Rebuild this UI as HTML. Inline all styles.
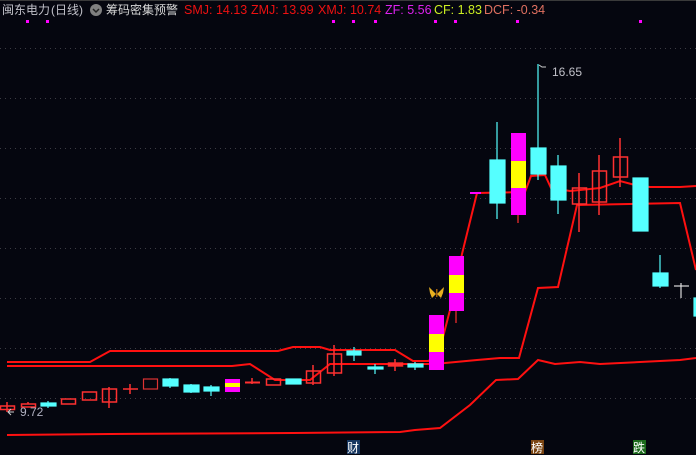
<!DOCTYPE html>
<html><head><meta charset="utf-8"><style>
html,body{margin:0;padding:0;background:#05060f;width:696px;height:455px;overflow:hidden}
svg{display:block}
text{font-family:"Liberation Sans","Noto Sans CJK SC",sans-serif}
</style></head><body>
<svg width="696" height="455" viewBox="0 0 696 455" xmlns="http://www.w3.org/2000/svg">
<rect width="696" height="455" fill="#05060f"/>
<line x1="0" y1="0.5" x2="696" y2="0.5" stroke="#3a3a3a"/>
<g stroke="#3c3c44" stroke-dasharray="1,4" stroke-width="1">
<line x1="0" y1="48.5" x2="696" y2="48.5"/><line x1="0" y1="98.5" x2="696" y2="98.5"/>
<line x1="0" y1="148.5" x2="696" y2="148.5"/><line x1="0" y1="198.5" x2="696" y2="198.5"/>
<line x1="0" y1="248.5" x2="696" y2="248.5"/><line x1="0" y1="298.5" x2="696" y2="298.5"/>
<line x1="0" y1="348.5" x2="696" y2="348.5"/><line x1="0" y1="398.5" x2="696" y2="398.5"/>
</g>
<text x="2" y="14" font-size="12" fill="#c0c0c8">闽东电力</text>
<text x="51" y="14" font-size="12" fill="#c0c0c8">(日线)</text>
<circle cx="96" cy="10" r="6" fill="#808080"/><path d="M93 9 l3 3 l3 -3" stroke="#222" stroke-width="1.5" fill="none"/>
<text x="106" y="14" font-size="12" fill="#d8d8d8">筹码密集预警</text>
<text x="184" y="14" font-size="12.5" fill="#ee1111">SMJ: 14.13</text>
<text x="251" y="14" font-size="12.5" fill="#ee1111">ZMJ: 13.99</text>
<text x="318" y="14" font-size="12.5" fill="#ee1111">XMJ: 10.74</text>
<text x="385" y="14" font-size="12.5" fill="#dd22ee">ZF: 5.56</text>
<text x="434" y="14" font-size="12.5" fill="#ccee22">CF: 1.83</text>
<text x="484" y="14" font-size="12.5" fill="#e07060">DCF: -0.34</text>
<g fill="#ff00ff">
<rect x="26" y="20" width="3" height="3"/><rect x="46" y="20" width="3" height="3"/><rect x="332" y="20" width="3" height="3"/>
<rect x="352" y="20" width="3" height="3"/><rect x="374" y="20" width="3" height="3"/><rect x="434" y="20" width="3" height="3"/>
<rect x="454" y="20" width="3" height="3"/><rect x="516" y="20" width="3" height="3"/><rect x="639" y="20" width="3" height="3"/>
</g>
<g fill="none" stroke="#ff1010" stroke-width="2">
<polyline points="7,362 90,362 110,351 278,351 293,347 320,347 330,350 395,350 413,361 429,361 443,337 450,310 462,254 477,193 525,192 531,176 545,175 551,188 570,191 600,188 620,181 635,185 650,187 680,187 696,186"/>
<polyline points="7,366 232,366 250,364 275,380 310,380 330,364 430,364 445,363 477,360 500,358 519,358 538,288 558,287 577,205 680,203 696,270"/>
<polyline points="7,435 110,434 293,433 400,432 415,430 440,428 470,405 496,380 518,379 538,360 555,364 580,362 600,364 640,362 680,360 696,358"/>
</g>
<line x1="470" y1="193" x2="481" y2="193" stroke="#ff00ff" stroke-width="2"/>
<g fill="none" stroke="#ff3030" stroke-width="1.5">
<line x1="7" y1="402" x2="7" y2="412"/><rect x="0.5" y="406" width="14" height="3.5"/>
<rect x="21.5" y="404" width="14" height="3"/><line x1="28" y1="402" x2="28" y2="404"/>
<rect x="61.5" y="399" width="14" height="5"/>
<rect x="82.5" y="392" width="14" height="8"/>
<line x1="109" y1="387" x2="109" y2="408"/><rect x="102.5" y="389" width="14" height="13"/>
<line x1="130" y1="384" x2="130" y2="394"/><line x1="123" y1="389" x2="138" y2="389"/>
<rect x="143.5" y="379" width="14" height="10" stroke="#dd3333" stroke-width="1.2"/>
<line x1="252" y1="378" x2="252" y2="384"/><line x1="245" y1="382.5" x2="260" y2="382.5" stroke-width="2"/>
<rect x="266.5" y="379" width="14" height="6"/>
<line x1="313" y1="365" x2="313" y2="385"/><rect x="306.5" y="371" width="14" height="12"/>
<line x1="334" y1="345" x2="334" y2="376"/><rect x="327.5" y="354" width="14" height="19"/>
<line x1="395" y1="359" x2="395" y2="371"/><rect x="388.5" y="363" width="14" height="3" fill="#ff3030" stroke-opacity="0.9"/>
<line x1="579" y1="173" x2="579" y2="232"/><rect x="572.5" y="188" width="14" height="16"/>
<line x1="599" y1="155" x2="599" y2="215"/><rect x="592.5" y="171" width="14" height="31"/>
<line x1="620" y1="138" x2="620" y2="187"/><rect x="613.5" y="157" width="14" height="20"/>
</g>
<g fill="#55ffff" stroke="#55ffff" stroke-width="1.2">
<rect x="41" y="403" width="15" height="3"/><line x1="48" y1="401" x2="48" y2="408"/>
<rect x="163" y="379" width="15" height="7"/><line x1="170" y1="378" x2="170" y2="388"/>
<rect x="184" y="385" width="15" height="7"/><line x1="191" y1="384" x2="191" y2="393"/>
<rect x="204" y="387" width="15" height="4"/><line x1="211" y1="385" x2="211" y2="396"/>
<rect x="286" y="379" width="15" height="5"/>
<rect x="347" y="351" width="14" height="4"/><line x1="354" y1="347" x2="354" y2="361"/>
<rect x="368" y="367" width="15" height="2"/><line x1="375" y1="364" x2="375" y2="374"/>
<rect x="408" y="364" width="15" height="3"/><line x1="415" y1="362" x2="415" y2="370"/>
<line x1="497" y1="122" x2="497" y2="219"/><rect x="490" y="160" width="15" height="43"/>
<line x1="538" y1="64" x2="538" y2="180"/><rect x="531" y="148" width="15" height="26"/>
<line x1="558" y1="155" x2="558" y2="214"/><rect x="551" y="166" width="15" height="34"/>
<rect x="633" y="178" width="15" height="53"/>
<line x1="660" y1="255" x2="660" y2="288"/><rect x="653" y="273" width="15" height="13"/>
<rect x="694" y="298" width="4" height="18"/>
</g>
<g stroke="#dddddd" stroke-width="1.2"><line x1="681" y1="283" x2="681" y2="298"/><line x1="674" y1="286" x2="689" y2="286"/></g>
<rect x="225" y="379" width="15" height="13" fill="#ff00ff"/><rect x="225" y="383" width="15" height="4" fill="#ffff00"/>
<rect x="429" y="315" width="15" height="55" fill="#ff00ff"/><rect x="429" y="334" width="15" height="18" fill="#ffff00"/>
<line x1="456" y1="311" x2="456" y2="323" stroke="#ff3030" stroke-width="1.2"/>
<rect x="449" y="256" width="15" height="55" fill="#ff00ff"/><rect x="449" y="275" width="15" height="18" fill="#ffff00"/>
<line x1="518" y1="215" x2="518" y2="223" stroke="#ff3030" stroke-width="1.2"/>
<rect x="511" y="133" width="15" height="82" fill="#ff00ff"/><rect x="511" y="161" width="15" height="27" fill="#ffff00"/>
<g fill="#e8b020"><path d="M436 294 L429 287 L430 293 L432 298 Z"/><path d="M437 294 L444 287 L443 293 L441 298 Z"/><rect x="436" y="289" width="1.5" height="8" fill="#a06010"/></g>
<path d="M14 412 l-6 0 m3 -3 l-3 3 l3 3" stroke="#ccc" fill="none"/>
<text x="20" y="416" font-size="12" fill="#b0b0c0">9.72</text>
<path d="M539 65 l3 2 l4 0" stroke="#ccc" fill="none"/>
<text x="552" y="76" font-size="12" fill="#c0c0c8">16.65</text>
<rect x="347" y="440" width="13" height="14" fill="#163660"/><text x="347" y="452" font-size="12" fill="#ffffff">财</text>
<rect x="531" y="440" width="13" height="14" fill="#7a4412"/><text x="531" y="452" font-size="12" fill="#ffffff">榜</text>
<rect x="633" y="440" width="13" height="14" fill="#1c6a1c"/><text x="633" y="452" font-size="12" fill="#ffffff">跌</text>
</svg>
</body></html>
